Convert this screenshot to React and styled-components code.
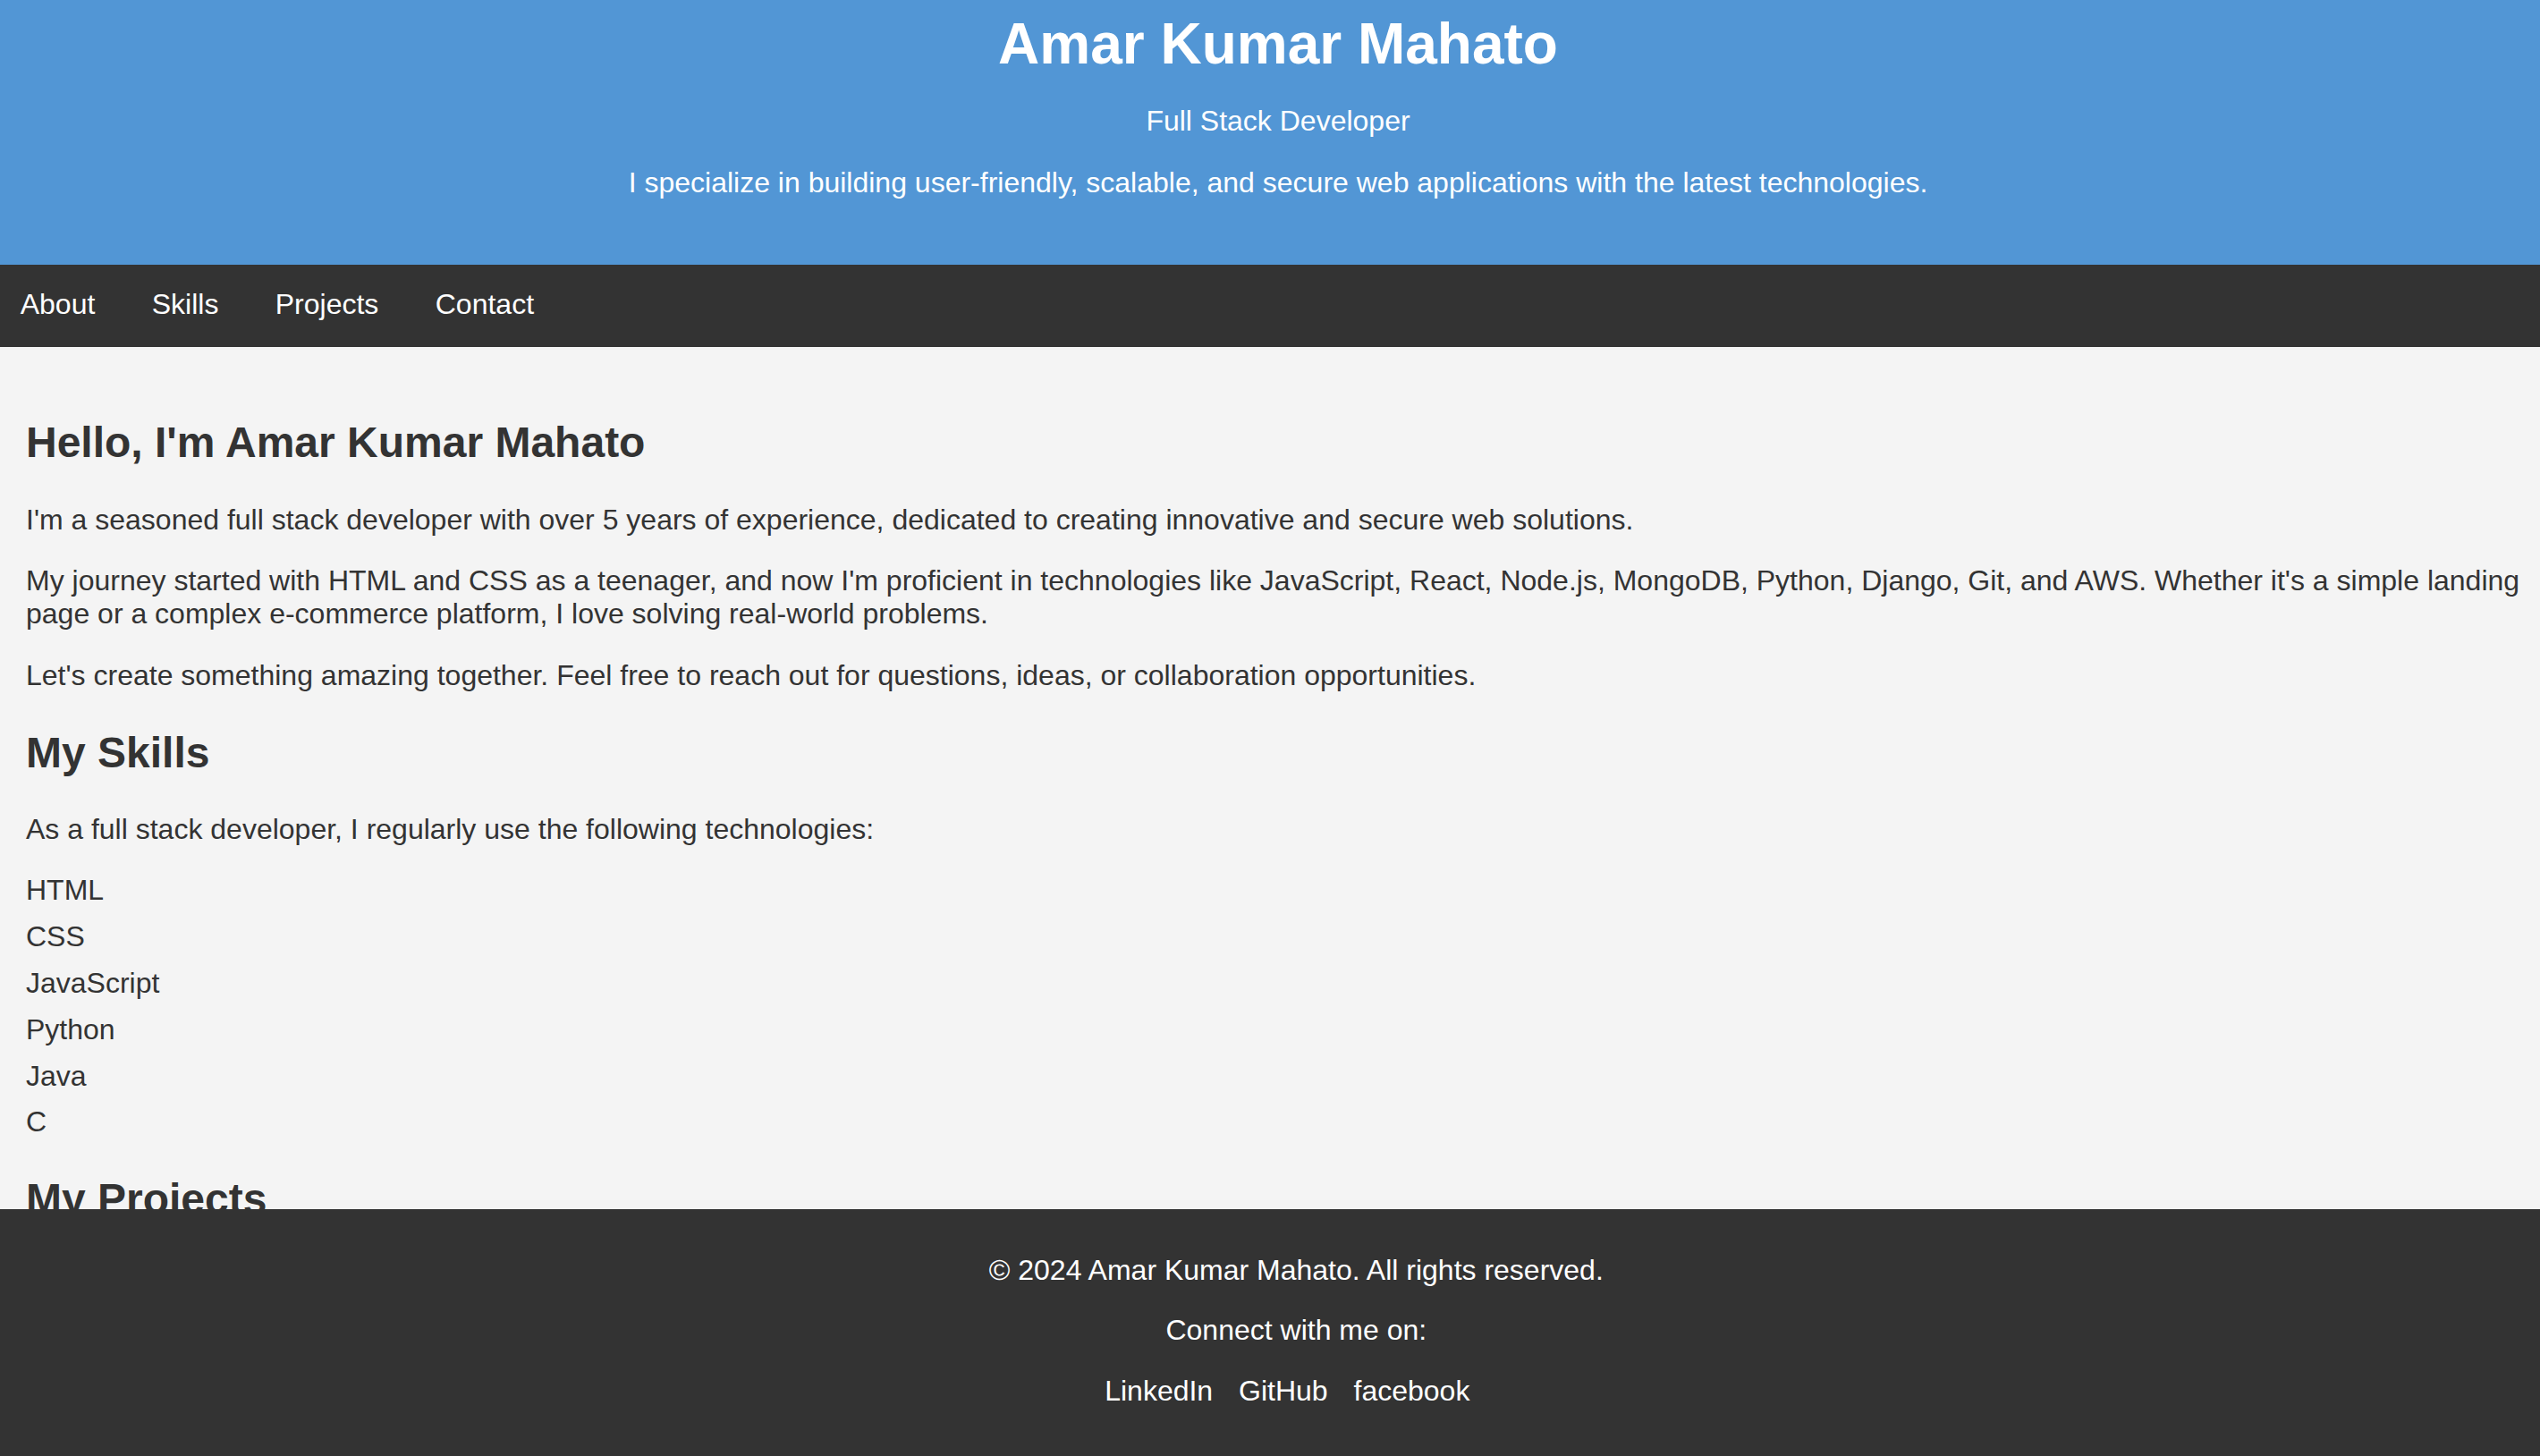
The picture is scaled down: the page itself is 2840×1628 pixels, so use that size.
import React from "react";
import styled, { createGlobalStyle } from "styled-components";

// data
const skills = ["HTML", "CSS", "JavaScript", "Python", "Java", "C"];
const navItems = ["About", "Skills", "Projects", "Contact"];
const socials = ["LinkedIn", "GitHub", "facebook"];

const GlobalStyle = createGlobalStyle`
  html, body {
    margin: 0;
    padding: 0;
  }
  body {
    background: #f4f4f4;
    color: #333;
    font-family: "Liberation Sans", Arial, Helvetica, sans-serif;
  }
`;

const App = () => {
  return (
    <Page>
      <GlobalStyle />
      <Header>
        <Title>Amar Kumar Mahato</Title>
        <HeaderText>Full Stack Developer</HeaderText>
        <HeaderText>
          I specialize in building user-friendly, scalable, and secure web
          applications with the latest technologies.
        </HeaderText>
      </Header>

      <Nav>
        {navItems.map((item) => (
          <NavLink key={item} href={`#${item.toLowerCase()}`}>
            {item}
          </NavLink>
        ))}
      </Nav>

      <Main>
        <section id="about">
          <Heading>Hello, I'm Amar Kumar Mahato</Heading>
          <Text>
            I'm a seasoned full stack developer with over 5 years of
            experience, dedicated to creating innovative and secure web
            solutions.
          </Text>
          <Text>
            My journey started with HTML and CSS as a teenager, and now I'm
            proficient in technologies like JavaScript, React, Node.js,
            MongoDB, Python, Django, Git, and AWS. Whether it's a simple
            landing page or a complex e-commerce platform, I love solving
            real-world problems.
          </Text>
          <Text>
            Let's create something amazing together. Feel free to reach out
            for questions, ideas, or collaboration opportunities.
          </Text>
        </section>

        <section id="skills">
          <Heading>My Skills</Heading>
          <Text>
            As a full stack developer, I regularly use the following
            technologies:
          </Text>
          <SkillList>
            {skills.map((s) => (
              <SkillItem key={s}>{s}</SkillItem>
            ))}
          </SkillList>
        </section>

        <section id="projects">
          <Heading>My Projects</Heading>
        </section>
      </Main>

      <Footer>
        <FooterText>© 2024 Amar Kumar Mahato. All rights reserved.</FooterText>
        <FooterText>Connect with me on:</FooterText>
        <SocialRow>
          {socials.map((s) => (
            <SocialLink key={s} href="#">
              {s}
            </SocialLink>
          ))}
        </SocialRow>
      </Footer>
    </Page>
  );
};

export default App;

const Page = styled.div`
  display: flex;
  flex-direction: column;
  height: 100vh;
  overflow: hidden;
`;

const Header = styled.header`
  flex-shrink: 0;
  background: #5296d5;
  color: #fff;
  text-align: center;
  padding: 12.7px 0 72.9px 18px;
`;

const Title = styled.h1`
  margin: 0 0 -0.8px;
  font-size: 64px;
  line-height: 73.6px;
  font-weight: bold;
`;

const HeaderText = styled.p`
  margin: 32px 0 0;
  font-size: 32px;
  line-height: 36.8px;
`;

const Nav = styled.nav`
  flex-shrink: 0;
  display: flex;
  gap: 63.4px;
  background: #333;
  padding: 26.2px 0 29px 22.7px;
`;

const NavLink = styled.a`
  color: #fff;
  text-decoration: none;
  font-size: 32px;
  line-height: 36.8px;
`;

const Main = styled.main`
  flex: 1;
  min-height: 0;
  overflow: hidden;
  padding: 39.7px 0 0 29px;
`;

const Heading = styled.h2`
  margin: 39.84px 0;
  font-size: 48px;
  line-height: 55.2px;
  font-weight: bold;
  color: #333;
`;

const Text = styled.p`
  margin: 32px 0;
  font-size: 32px;
  line-height: 36.8px;
  color: #333;
`;

const SkillList = styled.ul`
  list-style: none;
  padding: 0;
  margin: 32px 0;
`;

const SkillItem = styled.li`
  font-size: 32px;
  line-height: 36.8px;
  margin-bottom: 15px;
`;

const Footer = styled.footer`
  flex-shrink: 0;
  background: #333;
  color: #fff;
  text-align: center;
  padding: 49.5px 0 54px 58.6px;
`;

const FooterText = styled.p`
  margin: 0 0 31.05px;
  font-size: 32px;
  line-height: 36.8px;
`;

const SocialRow = styled.div`
  display: flex;
  justify-content: center;
  gap: 8.9px;
`;

const SocialLink = styled.a`
  color: #fff;
  text-decoration: none;
  font-size: 32px;
  line-height: 36.8px;
  margin-right: 20px;
`;
